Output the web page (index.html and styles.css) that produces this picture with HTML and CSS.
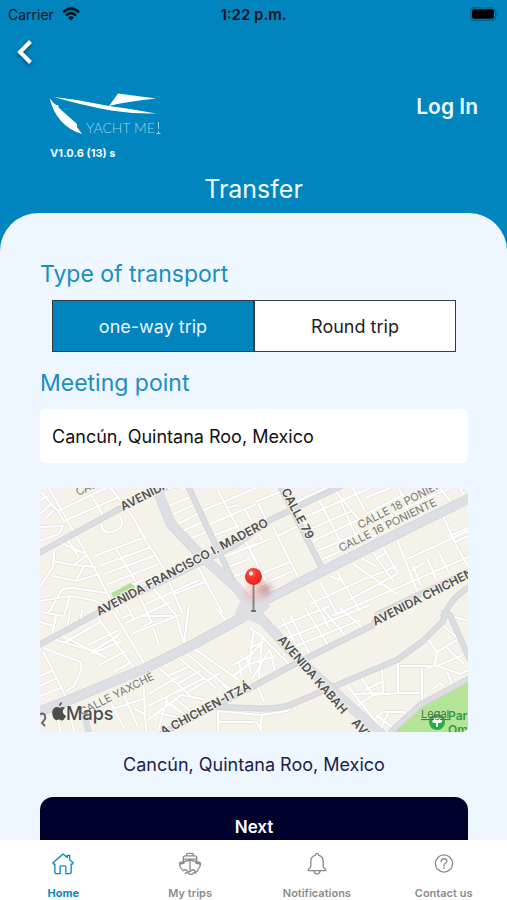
FILE: index.html
```html
<!DOCTYPE html>
<html lang="en">
<head>
<meta charset="utf-8">
<meta name="viewport" content="width=device-width, initial-scale=1">
<title>Transfer</title>
<link rel="stylesheet" href="styles.css">
</head>
<body>
<div class="app">
  <header class="header">
    <div class="status">
      <div class="status-left">
        <span>Carrier</span>
        <svg class="wifi" viewBox="0 0 18 14" aria-hidden="true">
          <g fill="none" stroke="#03121c" stroke-width="2.6">
            <path d="M1 5.2Q9-2 17 5.2"/>
            <path d="M4 8.4Q9 4 14 8.4"/>
          </g>
          <path d="M6 10.4Q9 8 12 10.4L9 13.6Z" fill="#03121c"/>
        </svg>
      </div>
      <span class="status-time">1:22 p.m.</span>
      <div class="status-right">
        <svg class="battery" viewBox="0 0 29 14" aria-hidden="true">
          <rect x=".7" y=".7" width="25" height="12.6" rx="3.6" fill="none" stroke="#04638d" stroke-width="1.4"/>
          <rect x="2" y="2.2" width="22" height="9.6" rx="2" fill="#000"/>
          <path d="M27 4.8Q29.4 7 27 9.2Z" fill="#04638d"/>
        </svg>
      </div>
    </div>
    <button class="back" type="button" aria-label="Back">
      <svg viewBox="0 0 18 26" aria-hidden="true"><path d="M14.5 2.5 4 13 14.5 23.5" fill="none" stroke="#fff" stroke-width="4"/></svg>
    </button>
    <div class="brand-row">
      <div class="brand">
        <svg class="logo" viewBox="0 0 112 44" role="img" aria-label="Yacht Me">
          <g fill="#fff">
            <path d="M5 4Q24 6 44 10L60 13Q84 16 107 20.500Q84 21 62 17.500Q32 12 5 4Z"/>
            <path d="M60 13 69 .5 107 5.500Q80 8 60 13Z"/>
            <path d="M.5 5Q4 10 7 12L9 12 10 15Q19 23 28 31L28 34 33 41Q20 37 12 28 4 19 .5 5Z"/>
          </g>
          <text class="logo-text" x="37" y="40">YACHT ME</text>
          <path d="M109.500 29v7M109.500 38v3M107.500 40.500h4" fill="none" stroke="#9bd3ec" stroke-width="1"/>
        </svg>
        <span class="version">V1.0.6 (13) s</span>
      </div>
      <a class="login" href="#login">Log In</a>
    </div>
    <h1 class="title">Transfer</h1>
  </header>

  <main class="sheet">
    <h2 class="heading">Type of transport</h2>
    <div class="segments">
      <button class="segment segment-on" type="button" aria-pressed="true">one-way trip</button>
      <button class="segment" type="button" aria-pressed="false">Round trip</button>
    </div>
    <h2 class="heading heading-point"><label for="point">Meeting point</label></h2>
    <input class="field" id="point" type="text" value="Cancún, Quintana Roo, Mexico">
    <div class="map">
      <svg class="map-art" viewBox="0 0 428 244" preserveAspectRatio="xMidYMid slice" role="img" aria-label="Map of Cancún">
        <defs>
          <path id="streets" d="M9 0 31 39 38 51 59 89 71 113 79 126M0 3 18 23 24 33M0 26 11 16 18 23 66 0M0 39 23 38 19 46 0 53M24 33 79 9M0 12 9 8M5 31 14 22M51 6 64 29M71 0 93 29 106 53 123 79 134 106 143 126M61 36Q63 46 72 44Q83 40 82 34L80 28M54 68 106 49M59 78 111 59M64 86 114 68M68 96 119 76M71 104 126 84M76 61 99 99M14 64 13 79 0 99M19 54 46 66M28 52 38 68M13 73 34 77 56 79M13 88 36 93 59 86M8 126 21 103Q28 98 40 101L66 105M0 113 30 108 52 112 74 120M30 108 24 128M36 93 44 78M47 67 34 77M3 124 22 128M16 128 12 148M0 134 14 138M30 123 26 146M42 122 40 140
          M119 3 146 -4M126 19 153 8M129 28 156 16M134 38 161 24M141 44 164 33M149 51 169 43M178 3 216 73M159 24 216 0M166 38 216 16M172 48 199 38M184 69 216 56M189 79 209 71M193 89 216 80M158 79 183 126M106 116 159 92M134 106 165 94M122 84 150 78M97 103 112 135M112 99 130 120M87 118 94 131 130 114M99 128 133 128M188 0 202 -4M186 20 198 17M142 2 147 -2
          M277 8 307 66M293 0 325 39M313 0 325 23M265 29 330 0M270 41 312 23M273 53 320 31M277 63 317 46M256 14 290 -2M281 72 345 43M215 14 262 -5M210 59 230 51M233 39 260 93M210 63 233 106M220 86 250 74M225 95 253 83M238 48 266 34M230 103 257 91M301 14 316 48M326 26 365 6M333 24 348 42M345 18 360 38M359 0 372 33M325 10 350 0M365 20 410 0M400 0 410 13M388 7 395 20M420 0 424 7M205 22 222 52M226 31 218 15
          M267 101 282 126 289 140M280 94 297 126M297 84 320 123M313 76 357 106M333 64 353 93M343 59 358 86M357 51 377 103M403 28 417 59 428 78M367 71 428 43M373 78 381 98M387 70 396 91M399 65 409 85M270 116 320 93 357 78M292 128 357 100 430 68M307 113 357 86M410 48 428 40M321 70 337 79M290 88 302 93M372 82 384 75M336 71 347 64M415 54 428 48
          M3 160 38 173Q43 175 41 182L34 198 26 203M3 163 29 215M9 150 53 163 79 147M17 145 66 170M24 155 60 134M56 127 94 180M73 123 104 175M48 157 79 142M51 166 82 153M59 177 86 163M73 184 90 175M0 188 12 183M0 198 17 190M0 208 21 200M86 135 129 115M93 145 140 127M104 138 112 134M113 140 119 157M136 127 144 155M149 118 144 155M176 120 186 133M82 130 92 126M129 120 136 127
          M119 180 153 210M139 170 176 200M153 160 199 192M147 166 190 201M128 188 150 178M137 196 160 183M146 205 180 185M214 143 209 176 193 188M193 177 214 165M199 174 202 190M207 170 211 185M103 188 106 243M108 206 140 188M108 218 165 190M108 232 141 207 163 211M128 207 118 243M126 213 149 230M134 210 157 228M118 225 147 231M40 220 46 243M70 213 84 240M60 225 106 210M84 207 98 239M16 220 20 243M29 219 34 243M95 221 106 227M178 243V223L220 227M178 234H214M188 202 183 196
          M242 130 256 157M250 127 270 167M265 120 288 157M282 120 307 150M300 120 323 140M247 150 330 117M238 139 290 118M256 158 320 132M220 147 250 177M210 160 226 152M222 148 219 190M210 176 235 168M212 191 230 161M230 162 235 184M210 140 226 151 210 167M218 198 224 214
          M358 173V205H380M342 180 343 205 313 206M382 180V215M360 178H397L423 167M387 150 397 164 395 177 387 181M397 164 420 150M407 160 424 176M397 178 420 186 428 182M411 128 426 132M403 138 417 149M307 197 343 243M320 188 333 207 310 223M325 202 341 194M310 223 300 215M358 205 333 207M333 233 343 224H363L371 229M336 227 352 239M348 225 341 240M393 201 400 195 404 199M407 184 412 196M220 243 222 227 247 223 253 217M216 234 222 243"/>
          <g id="roads">
            <path d="M-3 66 79 21 127 -1"/>
            <path d="M-3 158 58 125 196 57 230 32 303 -3"/>
            <path d="M148 -2 169 43 196 99"/>
            <path d="M240 -2 268 53 283 82"/>
            <path d="M121 246 214 198 247 180 333 137 338 126 432 82"/>
            <path d="M176 219 210 220Q233 222 250 217L290 200 357 172 383 153 403 133Q408 111 431 98"/>
            <path d="M401 125 410 127 430 172"/>
            <path d="M350 245 380 217 430 190"/>
            <path d="M44 225 49 245"/>
          </g>
          <g id="avenues">
            <path d="M-4 225 29 212 106 180 156 155 203 129 217 116 283 83 353 48 432 9"/>
            <path d="M115 -3 131 36 159 66 196 99Q207 112 213 122L230 140 257 170 290 200 343 248"/>
          </g>
          <radialGradient id="pin" cx=".38" cy=".28" r=".7"><stop offset="0" stop-color="#ff6a60"/><stop offset=".4" stop-color="#f9372f"/><stop offset="1" stop-color="#e5271f"/></radialGradient>
          <filter id="soft" x="-50%" y="-50%" width="200%" height="200%"><feGaussianBlur stdDeviation="3"/></filter>
        </defs>
        <rect width="428" height="244" fill="#f5f2ea"/>
        <path d="M71 105 91 95 95 99 74 110Z" fill="#b5df98"/>
        <path d="M352 246 383 217 430 193V246Z" fill="#b4e597"/>
        <g fill="none" stroke-linejoin="round">
          <use href="#streets" stroke="#e2e1df" stroke-width="3.4"/>
          <use href="#streets" stroke="#fff" stroke-width="2.2"/>
          <use href="#roads" stroke="#d0d1d5" stroke-width="6"/>
          <use href="#avenues" stroke="#d3d4d9" stroke-width="10"/>
          <use href="#roads" stroke="#dcdde1" stroke-width="4.6"/>
          <use href="#avenues" stroke="#dedfe5" stroke-width="8.6"/>
        </g>
        <path d="M201 112Q211 104 225 110L230 119Q217 128 221 137L208 132Q203 123 194 127Z" fill="#dedfe5"/>
        <path d="M71 105 91 95 95 99 74 110Z" fill="#b5df98"/>
        <g class="map-label">
          <text transform="translate(83 23) rotate(-27)">AVENIDA</text>
          <text transform="translate(59 128) rotate(-28)">AVENIDA FRANCISCO I. MADERO</text>
          <text transform="translate(241 3) rotate(62)">CALLE 79</text>
          <text transform="translate(335 138) rotate(-27)">AVENIDA CHICHEN</text>
          <text transform="translate(237 152) rotate(49)">AVENIDA KABAH</text>
          <text transform="translate(311 235) rotate(49)">AVE</text>
          <text transform="translate(123 248) rotate(-28)">A CHICHEN-ITZÁ</text>
        </g>
        <g class="map-label map-label-minor">
          <text transform="translate(38 8) rotate(-25)">CALLE</text>
          <text transform="translate(320 41) rotate(-27)">CALLE 18 PONIENTE</text>
          <text transform="translate(301 64) rotate(-26)">CALLE 16 PONIENTE</text>
          <text transform="translate(42 228) rotate(-27)">CALLE YAXCHÉ</text>
        </g>
        <path d="M0 226Q6 224 5 231L2 235 5 238" fill="none" stroke="#696969" stroke-width="2"/>
        <circle cx="397" cy="234" r="8" fill="#28ad45"/>
        <path d="M393 235Q391 231 395 230Q398 227 400 230Q404 231 401 235ZM396 234h2v5h-2Z" fill="#fff"/>
        <text class="park" x="408" y="232">Par</text>
        <text class="park" x="408" y="246">Om</text>
        <text class="legal" x="381" y="230">Legal</text>
        <g fill="#4c4c4c">
          <path d="M20 220Q23 218 25 220Q22 222 23 225Q24 227 26 228Q23 234 21 232Q19 231 17 232Q15 233 13 229Q11 223 14 220Q17 218 20 220ZM19 218Q19 215 22 214Q22 217 19 218Z"/>
          <text class="maps" x="26" y="232">Maps</text>
        </g>
        <ellipse cx="217" cy="103" rx="14" ry="9" transform="rotate(-25 217 103)" fill="#f2a3a3" opacity=".45" filter="url(#soft)"/>
        <ellipse cx="225" cy="102" rx="7" ry="5" transform="rotate(-25 225 102)" fill="#755" opacity=".4" filter="url(#soft)"/>
        <path d="M213.500 95V123" stroke="#858585" stroke-width="2"/>
        <path d="M211 123h5" stroke="#555" stroke-width="1.500"/>
        <circle cx="213.500" cy="88.500" r="8.500" fill="url(#pin)"/>
        <circle cx="211" cy="85.500" r="2" fill="#fff"/>
      </svg>
    </div>
    <p class="address">Cancún, Quintana Roo, Mexico</p>
    <button class="next" type="button">Next</button>
  </main>

  <nav class="tabs">
    <a class="tab tab-on" href="#home">
      <svg viewBox="0 0 24 24" aria-hidden="true"><path d="M1.500 11.200 12 2 16.500 5.800V3.500H19V8L22.500 11.200Q22.500 13 20.500 12.500V21Q20.500 22.500 19 22.500H15V15.500Q15 14.500 14 14.500H10Q9 14.500 9 15.500V22.500H5Q3.500 22.500 3.500 21V12.500Q1.500 13 1.500 11.200Z"/></svg>
      <span>Home</span>
    </a>
    <a class="tab" href="#trips">
      <svg viewBox="0 0 24 24" aria-hidden="true"><path d="M8.500 4V2.500Q8.500 1.500 9.500 1.500H14.500Q15.500 1.500 15.500 2.500V4M5 10V6Q5 4 7 4H17Q19 4 19 6V10M5 7.500H19M4 18.500Q1 15.500 1 12.200Q1 11 2.500 10.700L12 8.500 21.500 10.700Q23 11 23 12.200Q23 15.500 20 18.500M12 8.500V18.500M1.500 12.500 6 11.500M22.500 12.500 18 11.500M5 19.500Q7 17.500 9 19.500T13 19.500 17 19.500 20 19.500M7 22.500Q9 20.500 11 22.500T15 22.500 18 22"/></svg>
      <span>My trips</span>
    </a>
    <a class="tab" href="#notifications">
      <svg viewBox="0 0 24 24" aria-hidden="true"><path d="M10.500 3.200Q10.500 1.500 12 1.500T13.500 3.200Q18.500 4.500 18.500 10V15.500L21 18.200V19.500H3V18.200L5.500 15.500V10Q5.500 4.500 10.500 3.200ZM8.500 19.500Q9.500 22.800 12 22.800T15.500 19.500"/></svg>
      <span>Notifications</span>
    </a>
    <a class="tab" href="#contact">
      <svg viewBox="0 0 24 24" aria-hidden="true"><circle cx="12" cy="12" r="9"/><path d="M9 10Q9 7 12 7T15 9.700Q15 11 13.200 12Q12 12.800 12 14.200M12 15.800V17.300"/></svg>
      <span>Contact us</span>
    </a>
  </nav>
</div>
</body>
</html>
```
FILE: styles.css
```css
* {
  box-sizing: border-box;
}

body {
  margin: 0;
  font-family: Inter, "Liberation Sans", sans-serif;
  background: #0085be;
}

button,
input {
  font: inherit;
  margin: 0;
}

a {
  color: inherit;
  text-decoration: none;
}

svg {
  display: block;
}

.app {
  display: flex;
  flex-direction: column;
  height: 100vh;
  overflow: hidden;
}

.header {
  flex: none;
  color: #effaff;
}

.status {
  display: grid;
  grid-template-columns: 1fr auto 1fr;
  align-items: center;
  height: 28px;
  padding: 0 8px;
  font-size: 14px;
  color: #03121c;
}

.status-left {
  display: flex;
  align-items: center;
  gap: 8px;
}

.status-time {
  font-size: 15px;
  font-weight: 600;
}

.status-right {
  display: flex;
  justify-content: flex-end;
}

.wifi {
  width: 18px;
  height: 14px;
}

.battery {
  width: 29px;
  height: 14px;
}

.back {
  display: block;
  margin: 11px 0 0 16px;
  padding: 0;
  border: 0;
  background: none;
}

.back svg {
  width: 18px;
  height: 26px;
  filter: drop-shadow(0 2px 2px rgb(0 0 0 / 40%));
}

.brand-row {
  display: flex;
  justify-content: space-between;
  align-items: flex-start;
  padding: 28px 29px 0 49px;
}

.logo {
  width: 112px;
  height: 44px;
}

.logo-text {
  font: 300 14px Lato, sans-serif;
  fill: #9bd3ec;
}

.version {
  display: block;
  margin-top: 9px;
  padding-left: 1px;
  font-size: 11px;
  line-height: 14px;
  font-weight: 700;
}

.login {
  margin-top: 2px;
  font-size: 21px;
  line-height: 24px;
  font-weight: 600;
}

.title {
  margin: 14px 0 9px;
  text-align: center;
  font-size: 25px;
  line-height: 30px;
  font-weight: 400;
}

.sheet {
  display: flex;
  flex-direction: column;
  flex: 1;
  min-height: 0;
  overflow: hidden;
  padding: 47px 39px 0 40px;
  border-radius: 38px 38px 0 0;
  background: #eef7ff;
}

.sheet > * {
  flex: none;
}

.heading {
  margin: 0;
  font-size: 23px;
  line-height: 28px;
  font-weight: 400;
  color: #1a8dc4;
}

.segments {
  display: flex;
  margin: 12px 12px 17px;
}

.segment {
  flex: 1;
  height: 52px;
  padding: 0;
  border: 1px solid #333c42;
  background: #fff;
  color: #222;
  font-size: 18px;
}

.segment-on {
  background: #0085be;
  color: #e8f7ff;
}

.field {
  width: 100%;
  height: 54px;
  margin-top: 12px;
  padding: 0 12px;
  border: 0;
  border-radius: 6px;
  background: #fff;
  color: #111;
  font-size: 18px;
}

.map {
  margin-top: 25px;
  border-radius: 6px;
  overflow: hidden;
}

.map-art {
  width: 100%;
  height: auto;
}

.map-label {
  font-size: 12px;
  font-weight: 600;
  fill: #505050;
  stroke: #f5f2ea;
  stroke-width: 2px;
  stroke-linejoin: round;
  paint-order: stroke;
}

.map-label-minor {
  font-size: 11px;
  font-weight: 400;
  fill: #777;
}

.park {
  font-size: 12px;
  font-weight: 600;
  fill: #2c9e46;
}

.legal {
  font-size: 11px;
  fill: #5d6b59;
  text-decoration: underline;
}

.maps {
  font-size: 18px;
  font-weight: 500;
}

.address {
  margin: 21px 0 20px;
  text-align: center;
  font-size: 18px;
  line-height: 24px;
  color: #1c1c4d;
}

.next {
  height: 60px;
  padding: 0;
  border: 0;
  border-radius: 13px;
  background: #00002d;
  color: #fff;
  font-size: 17px;
  font-weight: 600;
}

.tabs {
  display: flex;
  flex: none;
  height: 60px;
  background: #fff;
}

.tab {
  display: flex;
  flex: 1;
  flex-direction: column;
  align-items: center;
  gap: 11px;
  padding-top: 12px;
  color: #8b8b8b;
  font-size: 11px;
  line-height: 14px;
  font-weight: 600;
}

.tab svg {
  width: 24px;
  height: 24px;
  fill: none;
  stroke: currentColor;
  stroke-width: 1.4;
  stroke-linejoin: round;
  stroke-linecap: round;
}

.tab-on {
  color: #0788c5;
  font-weight: 700;
}
```
